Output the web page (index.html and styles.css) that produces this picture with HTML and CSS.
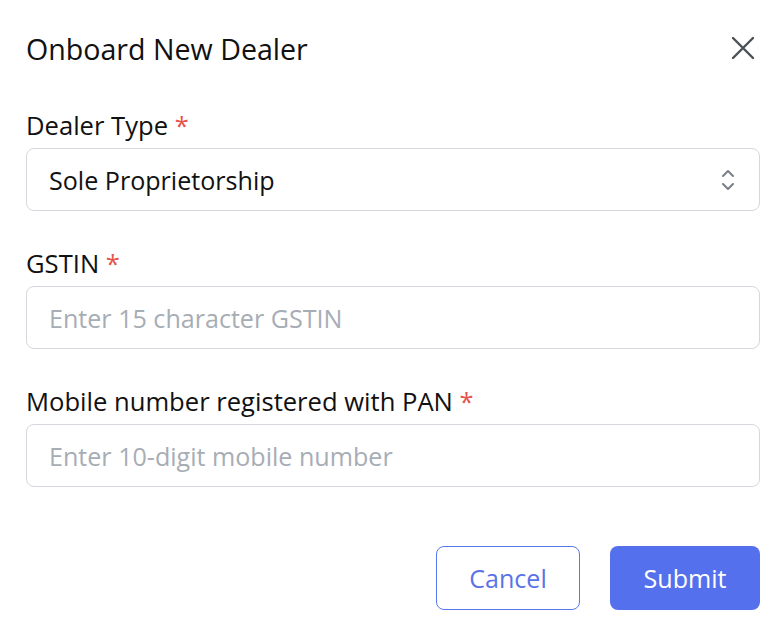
FILE: index.html
```html
<!DOCTYPE html>
<html>
<head>
<meta charset="utf-8">
<link rel="stylesheet" href="styles.css">
</head>
<body>
<div class="dialog">
  <div class="header">
    <h1 class="title">Onboard New Dealer</h1>
    <button class="close" aria-label="Close">
      <svg width="24" height="24" viewBox="0 0 24 24"><path d="M2 2L22 22M22 2L2 22" stroke="#4b4f57" stroke-width="2.4" stroke-linecap="round" fill="none"/></svg>
    </button>
  </div>
  <div class="field">
    <label class="label">Dealer Type <span class="req">*</span></label>
    <div class="select">
      <span class="value">Sole Proprietorship</span>
      <svg class="chev" width="14" height="22" viewBox="0 0 14 22"><path d="M2 7L7 2L12 7M2 15L7 20L12 15" stroke="#7a7f88" stroke-width="2" stroke-linecap="round" stroke-linejoin="round" fill="none"/></svg>
    </div>
  </div>
  <div class="field">
    <label class="label">GSTIN <span class="req">*</span></label>
    <div class="input"><span class="placeholder">Enter 15 character GSTIN</span></div>
  </div>
  <div class="field">
    <label class="label">Mobile number registered with PAN <span class="req">*</span></label>
    <div class="input"><span class="placeholder">Enter 10-digit mobile number</span></div>
  </div>
  <div class="actions">
    <button class="btn btn-outline">Cancel</button>
    <button class="btn btn-primary">Submit</button>
  </div>
</div>
</body>
</html>
```
FILE: styles.css
```css
* { box-sizing: border-box; }
html, body { margin: 0; padding: 0; background: #ffffff; }
body { font-family: "Open Sans", "Noto Sans", sans-serif; color: #111111; }
.dialog { width: 784px; padding: 24px 24px 0 26px; }
.header { display: flex; justify-content: space-between; align-items: center; height: 48px; }
.title { margin: 0; font-size: 28.6px; font-weight: 400; color: #111; }
.close { background: none; border: 0; padding: 0; margin-right: 5px; display: flex; }
.field { margin-top: 38px; }
.field + .field { margin-top: 37px; }
.label { display: block; font-size: 25.6px; line-height: 32px; color: #111; margin-bottom: 6px; }
.req { color: #e5534b; }
.select, .input { height: 63px; border: 1px solid #d4d7dc; border-radius: 8px; display: flex; align-items: center; padding: 0 22px; font-size: 25.1px; }
.select { justify-content: space-between; }
.value { color: #111; }
.placeholder { color: #a7adb5; }
.chev { margin-right: 2px; }
.actions { display: flex; justify-content: flex-end; gap: 30px; margin-top: 59px; }
.btn { font-family: inherit; font-size: 25.1px; height: 64px; border-radius: 8px; cursor: pointer; }
.btn-outline { width: 144px; background: #fff; border: 1px solid #5a78ee; color: #5a73e8; }
.btn-primary { width: 150px; background: #5570ed; border: 0; color: #fff; }
```
